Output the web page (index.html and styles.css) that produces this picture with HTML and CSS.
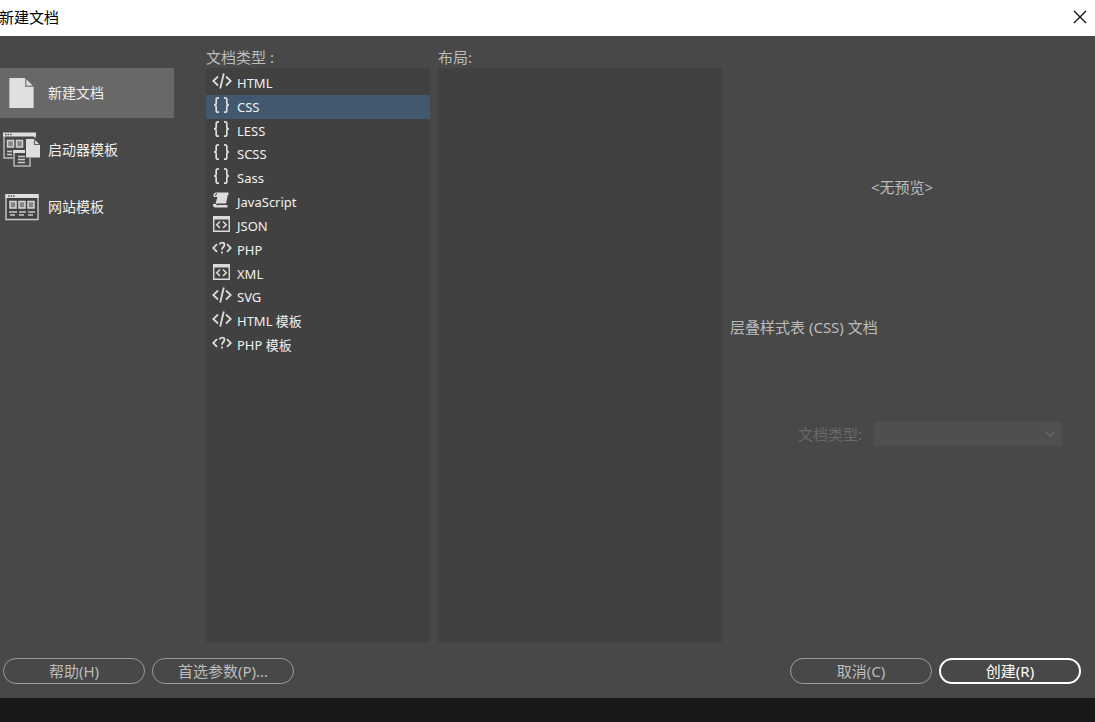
FILE: index.html
```html
<!DOCTYPE html>
<html lang="zh-CN">
<head>
<meta charset="utf-8">
<title>新建文档</title>
<link rel="stylesheet" href="styles.css">
</head>
<body>
<svg class="defs" aria-hidden="true">
  <symbol id="tag" viewBox="0 0 20 18"><path d="M6 4.5 1.2 9 6 13.5M14 4.5 18.8 9 14 13.5M11.8 1.5 8.2 16.5" fill="none" stroke="currentColor" stroke-width="1.8"/></symbol>
  <symbol id="braces" viewBox="0 0 20 18"><path d="M7 1.8H6C4.8 1.8 4.2 2.4 4.2 3.6V7C4.2 8.2 3.4 9 2 9C3.4 9 4.2 9.8 4.2 11V14.4C4.2 15.6 4.8 16.2 6 16.2H7M12 1.8H13C14.2 1.8 14.8 2.4 14.8 3.6V7C14.8 8.2 15.6 9 17 9C15.6 9 14.8 9.8 14.8 11V14.4C14.8 15.6 14.2 16.2 13 16.2H12" fill="none" stroke="currentColor" stroke-width="1.7"/></symbol>
  <symbol id="scroll" viewBox="0 0 20 18"><path d="M4 1.5H16.5V4H15.800L14 12.5H3.500L5.500 6H2C0.800 5 1.4 2 4 1.5Z" fill="currentColor"/><path d="M4.500 2.2 3.500 5" stroke="#414141"/><path d="M1 13H4.5C4.2 14.5 5 15 6 14H15.5V16.5H3C1.200 16.2 0.800 14.500 1 13Z" fill="currentColor"/></symbol>
  <symbol id="window" viewBox="0 0 20 18"><path d="M1.75 2H17.25V16.25H1.75Z" fill="none" stroke="currentColor" stroke-width="1.4"/><path d="M1 1H18V4.5H1Z" fill="currentColor"/><path d="M8 6.5 4.8 9.8 8 13M11 6.5 14.2 9.8 11 13" fill="none" stroke="currentColor" stroke-width="1.6"/></symbol>
  <symbol id="php" viewBox="0 0 20 18"><path d="M5 5.2 1.2 9 5 12.8M15 5.2 18.8 9 15 12.8M7.5 5.5C8 3.2 12.500 2.800 12.500 6C12.500 8 9.9 8 9.9 10.7" fill="none" stroke="currentColor" stroke-width="1.8"/><path d="M9 12.5H10.8V14.5H9Z" fill="currentColor"/></symbol>
</svg>
<main class="dialog">
  <header class="titlebar">
    <h1 class="title">新建文档</h1>
    <button class="close" aria-label="关闭"><svg width="14" height="14" viewBox="0 0 14 14"><path d="M1 1 13 13M13 1 1 13" stroke="#111" stroke-width="1.3"/></svg></button>
  </header>
  <div class="content">
    <nav class="sidebar">
      <button class="category active">
        <svg class="category-icon" viewBox="0 0 40 40"><path d="M9 5H25L34 14V35H9Z" fill="#858585"/><path d="M9.5 5H25V14H33.5V35H9.5Z" fill="#e0e0e0"/><path d="M26.5 6.5V12.5H32.5Z" fill="#e0e0e0"/></svg>
        新建文档
      </button>
      <button class="category">
        <svg class="category-icon" viewBox="0 0 40 40"><path d="M4 3V28H13M35 8V3" fill="none" stroke="#bdbdbd" stroke-width="1.4"/><path d="M3 2.5H36V6.5H3Z" fill="#dedede"/><path d="M5 4.5H12" stroke="#555" stroke-width="1.3" stroke-dasharray="1.5 1"/><path d="M7.5 10.5H13.5V17H7.5ZM16.5 10.5H22.5V17H16.5Z" fill="#858585" stroke="#d0d0d0" stroke-width="1.5"/><path d="M7 21.5H12M7 24.5H12" stroke="#ccc" stroke-width="1.3"/><path d="M14 21V36H30V28" fill="none" stroke="#b5b5b5" stroke-width="1.5"/><path d="M13 20H25V23H13Z" fill="#dedede"/><path d="M18 26.5H25M18 29.5H25M18 32.5H25" stroke="#ccc" stroke-width="1.3"/><path d="M26 9H34L40 15V27.5H26Z" fill="#dedede"/><path d="M34.5 9V14.5H40" fill="none" stroke="#666" stroke-width="1.2"/><path d="M35 8 41 14V8Z" fill="#484848"/></svg>
        启动器模板
      </button>
      <button class="category">
        <svg class="category-icon" viewBox="0 0 40 40"><path d="M6 8H38V32.5H6Z" fill="#414141" stroke="#c9c9c9" stroke-width="1.4"/><path d="M5.5 7H38.5V11H5.5Z" fill="#dedede"/><path d="M8 9H15" stroke="#555" stroke-width="1.3" stroke-dasharray="1.5 1"/><path d="M10 14.5H16V21H10ZM19 14.5H25V21H19ZM28 14.5H34V21H28Z" fill="#858585" stroke="#d6d6d6" stroke-width="1.5"/><path d="M9 25H17M19 25H26M28 25H35M10 28H15M19 28H24M28 28H33" stroke="#c8c8c8" stroke-width="1.4"/></svg>
        网站模板
      </button>
    </nav>
    <section class="column">
      <h2 class="label" id="types">文档类型 :</h2>
      <div class="panel">
        <div class="types" role="listbox" aria-labelledby="types">
          <button class="type" role="option"><svg class="type-icon"><use href="#tag"/></svg>HTML</button>
          <button class="type selected" role="option" aria-selected="true"><svg class="type-icon"><use href="#braces"/></svg>CSS</button>
          <button class="type" role="option"><svg class="type-icon"><use href="#braces"/></svg>LESS</button>
          <button class="type" role="option"><svg class="type-icon"><use href="#braces"/></svg>SCSS</button>
          <button class="type" role="option"><svg class="type-icon"><use href="#braces"/></svg>Sass</button>
          <button class="type" role="option"><svg class="type-icon"><use href="#scroll"/></svg>JavaScript</button>
          <button class="type" role="option"><svg class="type-icon"><use href="#window"/></svg>JSON</button>
          <button class="type" role="option"><svg class="type-icon"><use href="#php"/></svg>PHP</button>
          <button class="type" role="option"><svg class="type-icon"><use href="#window"/></svg>XML</button>
          <button class="type" role="option"><svg class="type-icon"><use href="#tag"/></svg>SVG</button>
          <button class="type" role="option"><svg class="type-icon"><use href="#tag"/></svg>HTML 模板</button>
          <button class="type" role="option"><svg class="type-icon"><use href="#php"/></svg>PHP 模板</button>
        </div>
      </div>
    </section>
    <section class="column">
      <h2 class="label">布局:</h2>
      <div class="panel"></div>
    </section>
    <section class="details">
      <p class="preview">&lt;无预览&gt;</p>
      <p class="description">层叠样式表 (CSS) 文档</p>
      <div class="field">
        <label for="doctype">文档类型:</label>
        <select class="doctype" id="doctype" disabled></select>
        <svg class="chevron" viewBox="0 0 12 8"><path d="M1 1.5 6 6 11 1.5" fill="none" stroke="#686868" stroke-width="1.4"/></svg>
      </div>
    </section>
  </div>
  <footer class="actions">
    <button class="action">帮助(H)</button>
    <button class="action">首选参数(P)...</button>
    <button class="action cancel">取消(C)</button>
    <button class="action primary">创建(R)</button>
  </footer>
</main>
</body>
</html>
```
FILE: styles.css
```css
* { box-sizing: border-box; }
body {
  margin: 0;
  min-height: 100vh;
  display: flex;
  flex-direction: column;
  padding-bottom: 24px;
  background: #181818;
  color: #bcbcbc;
  font: 14px/20px "Noto Sans", "Noto Sans CJK SC", sans-serif;
}
button, select { font: inherit; color: inherit; border: 0; background: none; padding: 0; }
h1, h2, p { margin: 0; font-weight: 400; }
.defs { position: absolute; width: 0; height: 0; }
.dialog { flex: 1; display: flex; flex-direction: column; background: #484848; }
.titlebar {
  height: 36px;
  display: flex;
  align-items: center;
  justify-content: space-between;
  padding-bottom: 2px;
  background: #fff;
  color: #000;
}
.title { font-size: 15px; line-height: 20px; margin-left: -1px; }
.close { display: flex; padding: 8px; }
.content {
  flex: 1;
  display: grid;
  grid-template-columns: 198px 224fr 284fr 365fr;
  column-gap: 8px;
}
.sidebar { display: flex; flex-direction: column; gap: 7px; padding: 32px 24px 0 0; }
.category {
  height: 50px;
  display: flex;
  align-items: center;
  gap: 8px;
  color: #f0f0f0;
  text-align: left;
}
.category.active { background: #686868; }
.category-icon { width: 40px; height: 40px; }
.column { display: flex; flex-direction: column; padding-top: 11px; }
.label { font-size: 15px; line-height: 20px; margin-bottom: 1px; }
.panel { flex: 1; background: #414141; border-radius: 2px; padding-top: 3px; }
.types { display: grid; grid-auto-rows: 1fr; height: 286px; }
.type {
  display: flex;
  align-items: center;
  gap: 5px;
  padding: 0 6px;
  color: #f0f0f0;
  font-size: 13px;
  line-height: 18px;
  text-align: left;
}
.type.selected { background: #42586e; }
.type-icon { width: 20px; height: 18px; margin-bottom: 4px; color: #dcdcdc; }
.details { display: flex; flex-direction: column; padding: 141px 33px 0 0; font-size: 15px; }
.preview { padding-left: 12px; text-align: center; }
.description { margin-top: 120px; }
.field {
  position: relative;
  display: flex;
  align-items: center;
  justify-content: flex-end;
  gap: 12px;
  margin-top: 85px;
  color: #686868;
}
.doctype { appearance: none; width: 188px; height: 24px; border-radius: 3px; background: #4f4f4f; opacity: 1; }
.chevron { position: absolute; right: 6px; width: 12px; height: 8px; }
.actions { display: flex; gap: 7px; padding: 15px 14px 14px 3px; }
.action { width: 142px; height: 26px; border: 1px solid #9a9a9a; border-radius: 13px; font-size: 15px; }
.cancel { margin-left: auto; }
.primary { border: 2px solid #fff; color: #fff; }
```
